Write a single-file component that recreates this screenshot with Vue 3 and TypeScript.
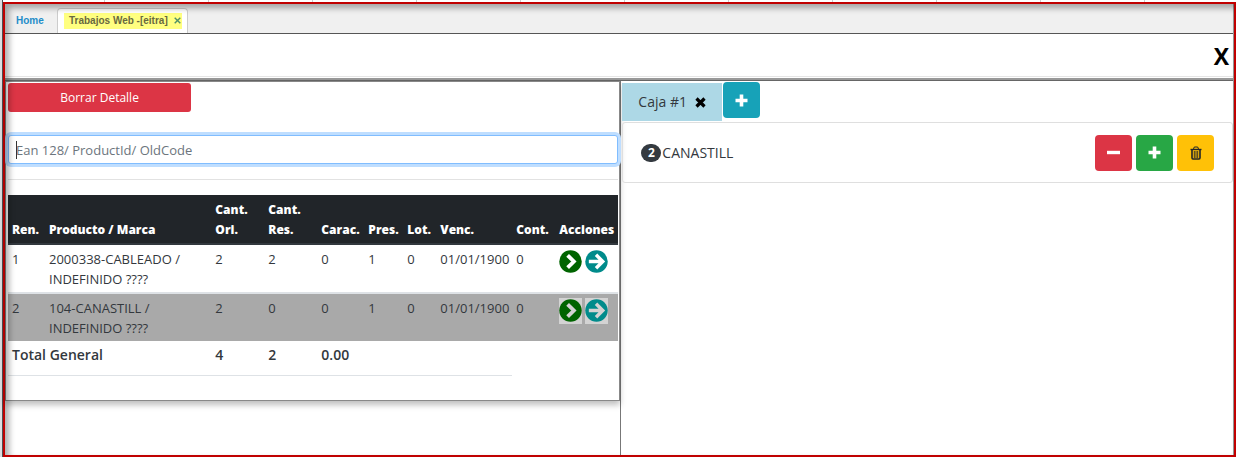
<script setup lang="ts">
import { ref } from 'vue'

interface Row {
  ren: number
  product: string
  ori: number
  res: number
  carac: number
  pres: number
  lot: number
  venc: string
  cont: number
  selected: boolean
}

const code = ref('')
const rows = ref<Row[]>([
  { ren: 1, product: '2000338-CABLEADO / INDEFINIDO ????', ori: 2, res: 2, carac: 0, pres: 1, lot: 0, venc: '01/01/1900', cont: 0, selected: false },
  { ren: 2, product: '104-CANASTILL / INDEFINIDO ????', ori: 2, res: 0, carac: 0, pres: 1, lot: 0, venc: '01/01/1900', cont: 0, selected: true },
])
const quantity = ref(2)
</script>

<template>
  <div class="page">
    <div class="ticks"></div>
    <div class="frame">
      <nav class="tabs">
        <a href="#" class="home">Home</a>
        <div class="tab">
          <span class="mark">
            <a href="#">Trabajos Web -[eitra]</a>
            <button type="button" class="tab-close" aria-label="Cerrar">
              <svg width="7" height="7" viewBox="0 0 7 7"><path d="M.7.7l5.600 5.600M6.300.7L.7 6.300" stroke="#4f8f68" stroke-width="1.400" /></svg>
            </button>
          </span>
        </div>
      </nav>
      <header class="bar">
        <button type="button" class="close">X</button>
      </header>
      <main class="split">
        <section class="left">
          <div class="panel">
            <button type="button" class="clear">Borrar Detalle</button>
            <input v-model="code" class="code" type="text" aria-label="Código" placeholder="Ean 128/ ProductId/ OldCode" />
            <hr />
            <table>
              <colgroup>
                <col class="w-ren" /><col /><col class="w-ori" /><col class="w-ori" /><col class="w-carac" />
                <col class="w-pres" /><col class="w-lot" /><col class="w-venc" /><col class="w-cont" /><col class="w-act" />
              </colgroup>
              <thead>
                <tr>
                  <th>Ren.</th><th>Producto / Marca</th><th>Cant. Ori.</th><th>Cant. Res.</th><th>Carac.</th>
                  <th>Pres.</th><th>Lot.</th><th>Venc.</th><th>Cont.</th><th>Acciones</th>
                </tr>
              </thead>
              <tbody>
                <tr v-for="r in rows" :key="r.ren" :class="{ selected: r.selected }">
                  <td>{{ r.ren }}</td>
                  <td>{{ r.product }}</td>
                  <td>{{ r.ori }}</td>
                  <td>{{ r.res }}</td>
                  <td>{{ r.carac }}</td>
                  <td>{{ r.pres }}</td>
                  <td>{{ r.lot }}</td>
                  <td>{{ r.venc }}</td>
                  <td>{{ r.cont }}</td>
                  <td>
                    <div class="actions">
                      <button type="button" aria-label="Pasar uno">
                        <svg width="23" height="23" viewBox="0 0 24 24"><circle cx="12" cy="12" r="11.700" fill="#006400" /><path d="M9 5.500l6.500 6.500L9 18.500" fill="none" :stroke="r.selected ? '#d3d3d3' : '#fff'" stroke-width="4" /></svg>
                      </button>
                      <button type="button" aria-label="Pasar todo">
                        <svg width="23" height="23" viewBox="0 0 24 24"><circle cx="12" cy="12" r="11.700" fill="#008b8b" /><path d="M4 12h14M11.500 5l7 7-7 7" fill="none" :stroke="r.selected ? '#d3d3d3' : '#fff'" stroke-width="3.600" /></svg>
                      </button>
                    </div>
                  </td>
                </tr>
                <tr class="total">
                  <td colspan="2">Total General</td>
                  <td>4</td><td>2</td><td colspan="2">0.00</td><td></td><td></td>
                </tr>
              </tbody>
            </table>
          </div>
        </section>
        <section class="right">
          <div class="boxes">
            <div class="box-tab">
              <a href="#">Caja #1</a>
              <button type="button" aria-label="Cerrar caja">
                <svg width="11" height="11" viewBox="0 0 11 11"><path d="M1.500 1.500l8 8M9.500 1.500l-8 8" stroke="#000" stroke-width="3.200" /></svg>
              </button>
            </div>
            <button type="button" class="sq teal" aria-label="Agregar caja">
              <svg width="13" height="13" viewBox="0 0 13 13"><path d="M6.500.5v12M.5 6.500h12" stroke="#fff" stroke-width="3.600" /></svg>
            </button>
          </div>
          <div class="item">
            <span class="badge">{{ quantity }}</span>
            <span class="name">CANASTILL</span>
            <button type="button" class="sq red" aria-label="Restar" @click="quantity--">
              <svg width="13" height="13" viewBox="0 0 13 13"><path d="M0 6.500h13" stroke="#fff" stroke-width="3.400" /></svg>
            </button>
            <button type="button" class="sq green" aria-label="Sumar" @click="quantity++">
              <svg width="13" height="13" viewBox="0 0 13 13"><path d="M6.500.5v12M.5 6.500h12" stroke="#fff" stroke-width="3.600" /></svg>
            </button>
            <button type="button" class="sq yellow" aria-label="Eliminar">
              <svg width="12" height="14" viewBox="0 0 12 14" fill="none" stroke="#212529"><path d="M.5 3.500h11" stroke-width="1.400" /><path d="M3.500 3l.8-2h3.400l.8 2" /><path d="M2 3.500v8.200q0 1.300 1 1.300h6q1 0 1-1.300V3.500" stroke-width="1.600" /><path d="M4.300 5v7M6 5v7M7.700 5v7" stroke-width=".9" /></svg>
            </button>
          </div>
        </section>
      </main>
    </div>
  </div>
</template>

<style>
body {
  margin: 0;
}
</style>

<style scoped>
* {
  box-sizing: border-box;
}
.page {
  min-height: 100vh;
  display: flex;
  flex-direction: column;
  padding-left: 3px;
  background: linear-gradient(to right, #dcdde0 2px, #4d5055 2px, #4d5055 3px, #fff 3px);
  font: 14px/20px "Open Sans", "Noto Sans", sans-serif;
  color: #33383d;
}
button {
  font: inherit;
  border: 0;
  padding: 0;
  background: none;
  cursor: pointer;
}
svg {
  display: block;
}
a {
  color: inherit;
  text-decoration: none;
}
.ticks {
  height: 2px;
  background: repeating-linear-gradient(to right, #fff 0 101px, #ccc 101px 102px, #fff 102px 104px);
}
.frame {
  position: relative;
  flex: 1;
  display: flex;
  flex-direction: column;
  border: 2px solid #c00000;
  background: #fff;
}
.frame::after {
  content: "";
  position: absolute;
  inset: 0;
  pointer-events: none;
  box-shadow: inset 4px 4px 6px rgba(0, 0, 0, 0.33), inset -1px 0 0 #999;
}
.tabs {
  display: flex;
  align-items: flex-end;
  height: 30px;
  padding-left: 11px;
  background: #f0f0f0;
  border-bottom: 1px solid #555;
  font: bold 10px/16px "Liberation Sans", Arial, sans-serif;
}
.home {
  width: 41px;
  padding-bottom: 4px;
  color: #1f8dc9;
}
.tab {
  height: 25px;
  padding: 4px 5px 0 6px;
  background: #fff;
  border: 1px solid #ccc;
  border-bottom: 0;
  border-radius: 4px 4px 0 0;
}
.mark {
  display: flex;
  gap: 6px;
  height: 16px;
  padding: 0 1px 0 5px;
  background: #ffff80;
  color: #696940;
  white-space: nowrap;
}
.tab-close {
  display: flex;
  padding-top: 4px;
}
.bar {
  display: flex;
  justify-content: flex-end;
  align-items: center;
  height: 46px;
  padding-right: 5px;
  border-bottom: 2px solid #999;
  box-shadow: inset 0 -1px #fff, inset 0 -2px #e5e5e5;
}
.close {
  font: bold 23px/28px "Open Sans", sans-serif;
  color: #000;
}
.split {
  flex: 1;
  display: grid;
  grid-template-columns: 503fr 500fr;
  border-top: 1px solid #666;
}
.left {
  border-right: 1px solid #777;
}
.panel {
  padding: 1px 1px 24px 2px;
  border: 1px solid #888;
  box-shadow: 0 4px 6px rgba(0, 0, 0, 0.25);
}
.clear {
  display: block;
  width: 30%;
  height: 29px;
  border-radius: 3px;
  background: #dc3545;
  color: #fff;
  font-size: 12px;
}
.code {
  display: block;
  width: 100%;
  height: 29px;
  margin-top: 23px;
  padding: 0 7px;
  border: 1px solid #80bdff;
  border-radius: 3px;
  outline: 0;
  background: linear-gradient(#333, #333) 7px center / 1px 18px no-repeat #fff;
  box-shadow: 0 0 0 3px #bfdeff;
  font: 13px/20px "Open Sans", "Noto Sans", sans-serif;
  color: #495057;
}
.code::placeholder {
  color: #6c757d;
}
hr {
  margin: 15px 0;
  border: 0;
  border-top: 1px solid #e2e2e2;
}
table {
  width: 100%;
  table-layout: fixed;
  border-collapse: separate;
  border-spacing: 0;
  font-size: 13px;
}
.w-ren { width: 37px; }
.w-ori { width: 53px; }
.w-carac { width: 47px; }
.w-pres { width: 39px; }
.w-lot { width: 33px; }
.w-venc { width: 76px; }
.w-cont { width: 43px; }
.w-act { width: 63px; }
th {
  padding: 5px 0 3px 4px;
  background: #212529;
  border-bottom: 2px solid #32383e;
  color: #fff;
  font-size: 12px;
  font-weight: 800;
  text-align: left;
  vertical-align: bottom;
}
td {
  padding: 4px 0 3px 4px;
  border-bottom: 2px solid #dee2e6;
  vertical-align: top;
}
th:nth-child(3),
th:nth-child(4) {
  padding-right: 12px;
}
td:nth-child(2) {
  padding-right: 20px;
}
.selected td {
  background: #a9a9a9;
  border-bottom: 0;
}
.actions {
  display: flex;
  gap: 3px;
}
.actions button {
  padding: 1px 0 2px;
}
.selected .actions button {
  background: #d3d3d3;
}
.total td {
  padding: 2px 0 8px 4px;
  border-bottom: 1px solid #dee2e6;
  font-size: 14px;
  line-height: 24px;
  font-weight: 600;
}
.right {
  padding: 1px 1px 0;
}
.boxes {
  display: flex;
  gap: 1px;
  height: 40px;
}
.box-tab {
  display: flex;
  align-items: center;
  gap: 8px;
  height: 38px;
  margin-top: 1px;
  padding: 0 16px;
  background: #add8e6;
}
.sq {
  display: flex;
  align-items: center;
  justify-content: center;
  width: 37px;
  height: 36px;
  border-radius: 4px;
}
.teal { background: #17a2b8; }
.red { background: #dc3545; }
.green { background: #28a745; }
.yellow { background: #ffc107; }
.item {
  display: flex;
  align-items: center;
  gap: 4px;
  height: 61px;
  padding: 0 18px;
  border: 1px solid #dfdfdf;
  border-radius: 3px;
}
.badge {
  width: 20px;
  height: 18px;
  border-radius: 9px;
  background: #343a40;
  color: #fff;
  font-size: 12px;
  line-height: 18px;
  font-weight: 700;
  text-align: center;
}
.name {
  flex: 1;
  margin-left: -3px;
}
</style>
